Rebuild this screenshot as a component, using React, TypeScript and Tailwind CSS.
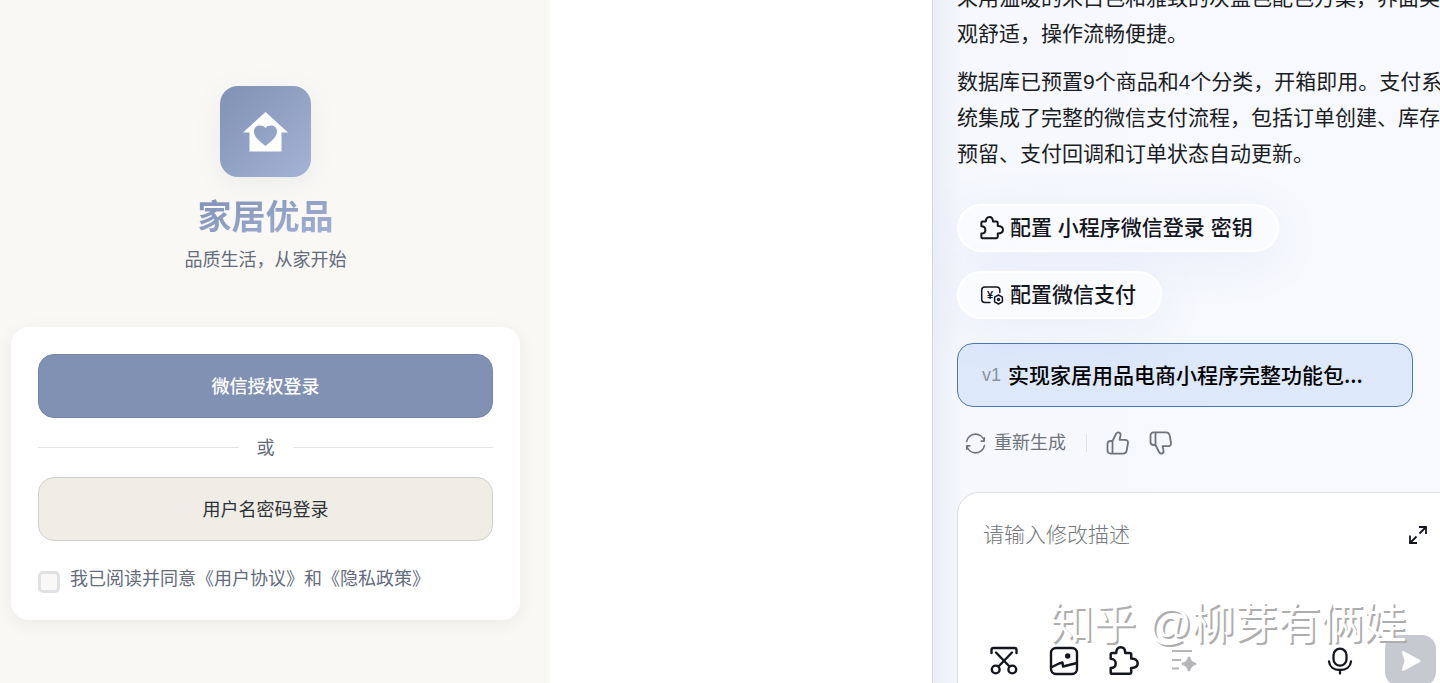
import React from "react";

interface IconProps {
  className?: string;
}

const HomeHeartIcon: React.FC<IconProps> = ({ className }) => (
  <svg viewBox="0 0 45 40" className={className} fill="currentColor" aria-hidden="true">
    <path
      fillRule="evenodd"
      d="M22.5 0 45 20.5H38.5V39.5H6.5V20.5H0ZM22.5 34C27 30 34 25.5 34 19.5C34 15.8 31.5 13.5 28.3 13.5C25.8 13.5 23.7 14.3 22.5 16C21.3 14.3 19.2 13.5 16.7 13.5C13.5 13.5 11 15.8 11 19.5C11 25.5 18 30 22.5 34Z"
    />
  </svg>
);

const PuzzleIcon: React.FC<IconProps> = ({ className }) => (
  <svg viewBox="0 0 30 30" className={className} fill="none" stroke="currentColor" strokeWidth="2.5" strokeLinejoin="round" aria-hidden="true">
    <path d="M1.7 8.5C1.7 7.5 2.2 7 3.2 7H7.2C7.2 3.5 8.8 1.3 11.7 1.3S16.2 3.5 16.2 7H20.5C21.5 7 22.2 7.6 22.2 8.6V12.5C26 12.5 28.7 14.3 28.7 17.3S26 22 22.2 22V26C22.2 27.2 21.5 27.8 20.5 27.8H3.2C2.2 27.8 1.7 27.2 1.7 26.2V22C4.7 22 6.7 20.3 6.7 17.5S4.7 12.8 1.7 12.8Z" />
  </svg>
);

const PayConfigIcon: React.FC<IconProps> = ({ className }) => (
  <svg viewBox="0 0 24 24" className={className} fill="none" stroke="currentColor" strokeWidth="1.5" strokeLinecap="round" strokeLinejoin="round" aria-hidden="true">
    <path d="M10 19.5H5C3 19.5 1.7 18.3 1.7 16.3V7C1.7 5 3 4 5 4H16.5C18.5 4 19.8 5 19.8 7V9.5" />
    <path d="M18.5 12 22.4 14.2V18.8L18.5 21 14.6 18.8V14.2Z" />
    <circle cx="18.5" cy="16.5" r="1" />
    <text x="10" y="15.5" textAnchor="middle" fontSize="11" fontWeight="700" fill="currentColor" stroke="none">¥</text>
  </svg>
);

const RefreshIcon: React.FC<IconProps> = ({ className }) => (
  <svg viewBox="0 0 22 22" className={className} fill="none" stroke="currentColor" strokeWidth="1.6" strokeLinecap="round" strokeLinejoin="round" aria-hidden="true">
    <path d="M1.6 9A9.5 9.5 0 0 1 20.2 8.5V5M20.2 8.5H17" />
    <path d="M20.4 13A9.5 9.5 0 0 1 1.8 13.5V17M1.8 13.5H5" />
  </svg>
);

const ThumbIcon: React.FC<IconProps & { down?: boolean }> = ({ className, down }) => (
  <svg viewBox="0 0 24 24" className={className} fill="none" stroke="currentColor" strokeWidth="1.8" strokeLinecap="round" strokeLinejoin="round" aria-hidden="true">
    <g transform={down ? "translate(0 24) scale(1 -1)" : undefined}>
      <path d="M6.5 10 10 3C10.6 1.6 12 1 13.2 1.6C14.4 2.2 14.8 3.4 14.5 4.6L13.6 8.8H19C21 8.8 22.3 10.2 22 12L20.8 19C20.4 21.2 19.2 22.6 17 22.6H4.6C2.6 22.6 1.5 21.4 1.5 19.4V13C1.5 11 2.6 10 4.6 10H6.5V22.5" />
    </g>
  </svg>
);

const ExpandIcon: React.FC<IconProps> = ({ className }) => (
  <svg viewBox="0 0 18 18" className={className} fill="none" stroke="currentColor" strokeWidth="1.8" aria-hidden="true">
    <path d="M10 1H17V8M17 1 10.5 7.5M1 9.5V17H8M1 17 7.5 10.5" />
  </svg>
);

const ScissorsIcon: React.FC<IconProps> = ({ className }) => (
  <svg viewBox="0 0 30 30" className={className} fill="none" stroke="currentColor" strokeWidth="2.4" strokeLinecap="round" strokeLinejoin="round" aria-hidden="true">
    <path d="M2.5 7V4C2.5 2.6 3.2 2 4.5 2H25.5C26.8 2 27.5 2.6 27.5 4V7" />
    <path d="M7 6.5 20.5 20.5M23 6.5 9.5 20.5" />
    <circle cx="6.7" cy="23.5" r="3.9" />
    <circle cx="23.3" cy="23.5" r="3.9" />
  </svg>
);

const PictureIcon: React.FC<IconProps> = ({ className }) => (
  <svg viewBox="0 0 30 30" className={className} fill="none" stroke="currentColor" strokeWidth="2.4" strokeLinejoin="round" aria-hidden="true">
    <rect x="2" y="2" width="26" height="26" rx="5" />
    <path d="M2 21.5 10 17.5 13.5 16.5 14 20.5 28 17" />
    <circle cx="18.7" cy="10" r="2.7" fill="currentColor" stroke="none" />
  </svg>
);

const PolishIcon: React.FC<IconProps> = ({ className }) => (
  <svg viewBox="0 0 30 30" className={className} fill="none" stroke="currentColor" strokeWidth="2.2" aria-hidden="true">
    <path d="M3 5H23M3 14H12M3 22.5H10" />
    <path d="M20 11C21 15.5 22.5 17 27 18C22.5 19 21 20.5 20 25C19 20.5 17.5 19 13 18C17.5 17 19 15.5 20 11Z" fill="currentColor" />
  </svg>
);

const MicIcon: React.FC<IconProps> = ({ className }) => (
  <svg viewBox="0 0 30 30" className={className} fill="none" stroke="currentColor" strokeWidth="2.3" strokeLinecap="round" aria-hidden="true">
    <rect x="8.5" y="2.7" width="13" height="17" rx="6.5" />
    <path d="M4 15.5C4.5 20.5 8.5 24 15 24S25.5 20.5 26 15.5M15 24V27.5" />
  </svg>
);

const SendIcon: React.FC<IconProps> = ({ className }) => (
  <svg viewBox="0 0 20 22" className={className} fill="currentColor" stroke="currentColor" strokeWidth="2" strokeLinejoin="round" aria-hidden="true">
    <path d="M2 2 18.5 11 2 20C2 16.5 4.2 14.5 4.5 11C4.2 7.5 2 5.5 2 2Z" />
  </svg>
);

const LoginPreview: React.FC = () => (
  <section className="w-[550px] shrink-0 bg-[#f9f8f5] pl-[11px] pr-[30px] pt-[86px]">
    <div className="flex flex-col items-center">
      <div className="flex h-[91px] w-[91px] items-center justify-center rounded-[18px] bg-linear-to-br from-[#8091b4] to-[#a4b3d6] text-white shadow-[0_6px_24px_rgba(128,145,180,0.12)]">
        <HomeHeartIcon className="h-10 w-[45px]" />
      </div>
      <h1 className="mt-4 bg-linear-to-br from-[#8091b4] to-[#a4b3d6] bg-clip-text text-[34px] font-bold leading-[48px] text-transparent">
        家居优品
      </h1>
      <p className="mt-1 text-lg leading-[30px] text-[#636b7d]">品质生活，从家开始</p>
    </div>

    <div className="mt-[52px] rounded-[18px] bg-white p-[27px] shadow-[0_4px_18px_rgba(0,0,0,0.06)]">
      <button
        type="button"
        className="h-16 w-full cursor-pointer rounded-2xl border border-[#7585aa] bg-[#8091b4] pt-0.5 text-lg font-medium text-white"
      >
        微信授权登录
      </button>

      <div className="flex h-[59px] items-center gap-[18px] text-lg text-[#636b7d]">
        <span className="h-px flex-1 bg-[#e2e4e8]" />
        或
        <span className="h-px flex-1 bg-[#e2e4e8]" />
      </div>

      <button
        type="button"
        className="h-16 w-full cursor-pointer rounded-2xl border border-[#cfd1cd] bg-[#efede6] pt-0.5 text-lg text-[#2f3237]"
      >
        用户名密码登录
      </button>

      <div className="mt-6 flex items-start gap-[10px] text-lg leading-7 text-[#636b7d]">
        <input
          id="agree"
          type="checkbox"
          className="mt-1.5 h-[22px] w-[22px] shrink-0 appearance-none rounded-[5px] border-3 border-[#dfe1e5] bg-[#f9f8f6] checked:bg-[#8091b4]"
        />
        <label htmlFor="agree">
          我已阅读并同意<a href="#agreement">《用户协议》</a>和<a href="#privacy">《隐私政策》</a>
        </label>
      </div>
    </div>
  </section>
);

const pillClass =
  "flex h-12 cursor-pointer items-center gap-1.5 rounded-full border-2 border-white bg-[#fafbfe] pl-[21px] pr-6 text-[21px] font-medium text-[#14161f] shadow-[0_10px_50px_rgba(90,130,220,0.09)]";

const Composer: React.FC = () => (
  <div className="relative mt-[35px] w-[506px] rounded-t-[22px] border border-[#dadde1] bg-white">
    <div className="flex items-start pl-[25px] pr-[35px] pt-6">
      <textarea
        aria-label="修改描述"
        placeholder="请输入修改描述"
        className="h-[118px] flex-1 resize-none text-[21px] leading-9 text-[#14161f] outline-none placeholder:font-light placeholder:text-[#74777c]"
      />
      <button type="button" aria-label="展开" className="mt-[9px] cursor-pointer text-[#14161f]">
        <ExpandIcon className="h-[18px] w-[18px]" />
      </button>
    </div>

    <div className="flex items-center gap-[30px] pb-6 pl-[31px] pr-[26px] text-[#14161f]">
      <button type="button" aria-label="截图">
        <ScissorsIcon className="h-[30px] w-[30px]" />
      </button>
      <button type="button" aria-label="图片">
        <PictureIcon className="h-[30px] w-[30px]" />
      </button>
      <button type="button" aria-label="插件">
        <PuzzleIcon className="h-[30px] w-[30px]" />
      </button>
      <button type="button" aria-label="润色" className="text-[#b5b6ba]">
        <PolishIcon className="h-[30px] w-[30px]" />
      </button>
      <button type="button" aria-label="语音" className="ml-auto">
        <MicIcon className="h-[30px] w-[30px]" />
      </button>
      <button
        type="button"
        aria-label="发送"
        className="flex h-[51px] w-[51px] items-center justify-center rounded-[14px] bg-[#c7c9d0] text-white"
      >
        <SendIcon className="h-[22px] w-5" />
      </button>
    </div>

    {/* Watermark */}
    <span className="pointer-events-none absolute left-[92px] top-[99px] whitespace-nowrap text-[43px] leading-[64px] text-white [text-shadow:2px_2px_0_#adadad]">
      知乎 @柳芽有俩娃
    </span>
  </div>
);

const ChatPanel: React.FC = () => (
  <section className="w-[508px] shrink-0 overflow-hidden border-l border-[#d8dadf] bg-linear-to-r from-[#ebeef6] via-[#f6f8fd] via-6% to-[#f8f9fd] pl-6">
    <div className="-mt-5 flex w-[490px] flex-col gap-3 text-[21px] leading-9 text-[#1b1d25]">
      <p>采用温暖的米白色和雅致的灰蓝色配色方案，界面美观舒适，操作流畅便捷。</p>
      <p>数据库已预置9个商品和4个分类，开箱即用。支付系统集成了完整的微信支付流程，包括订单创建、库存预留、支付回调和订单状态自动更新。</p>
    </div>

    <div className="mt-8 flex flex-col items-start gap-[19px]">
      <button type="button" className={pillClass}>
        <PuzzleIcon className="h-6 w-6" />
        配置 小程序微信登录 密钥
      </button>
      <button type="button" className={pillClass}>
        <PayConfigIcon className="h-6 w-6" />
        配置微信支付
      </button>
    </div>

    <button
      type="button"
      className="mt-6 flex h-16 w-[456px] cursor-pointer items-center gap-[7px] rounded-2xl border border-[#4f78b3] bg-[#dde8fa] px-6 text-[21px] font-medium text-black"
    >
      <span className="text-lg font-normal text-[#8b93a3]">v1</span>
      <span className="truncate font-['Noto_Sans_CJK_SC',sans-serif]">实现家居用品电商小程序完整功能包...</span>
    </button>

    <div className="mt-[22px] flex h-7 items-center pl-2 text-[#6f737b]">
      <button type="button" className="flex cursor-pointer items-center gap-2 text-lg">
        <RefreshIcon className="h-[21px] w-[21px]" />
        重新生成
      </button>
      <span className="ml-5 h-[18px] w-px bg-[#dfe1e6]" />
      <button type="button" aria-label="赞" className="ml-[19px] cursor-pointer">
        <ThumbIcon className="h-6 w-6" />
      </button>
      <button type="button" aria-label="踩" className="ml-[19px] cursor-pointer">
        <ThumbIcon down className="h-6 w-6" />
      </button>
    </div>

    <Composer />
  </section>
);

export default function App() {
  return (
    <main className="flex h-screen overflow-hidden bg-white font-['Liberation_Sans','Noto_Sans_CJK_SC',sans-serif]">
      <LoginPreview />
      <div className="flex-1" />
      <ChatPanel />
    </main>
  );
}
